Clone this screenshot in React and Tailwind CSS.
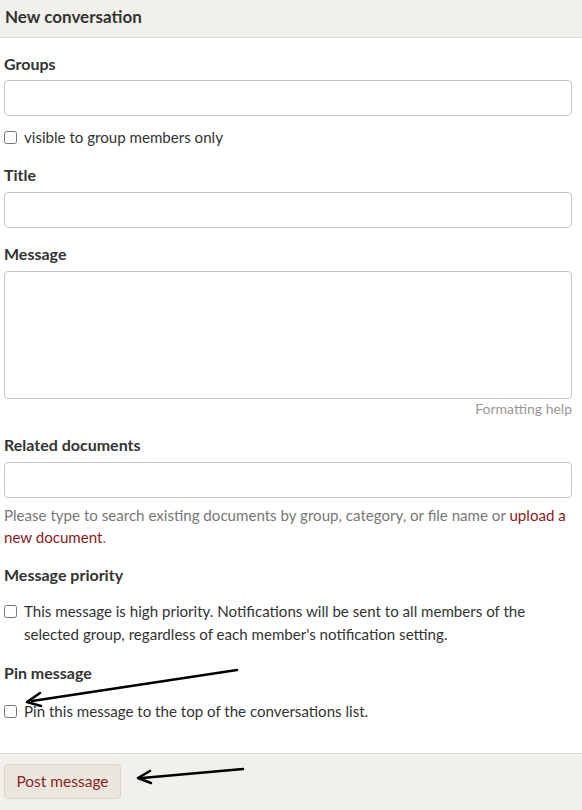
import React from "react";

const Label = ({ children, className = "" }) => (
  <div className={`text-[16px] leading-[20px] font-bold text-[#333] ${className}`}>{children}</div>
);

const Input = ({ className = "" }) => (
  <div className={`h-[36px] w-full rounded-[4px] border border-[#c6c6c6] bg-white ${className}`} />
);

const Check = () => (
  <input type="checkbox" className="m-0 h-[13px] w-[13px] shrink-0" />
);

export default function App() {
  return (
    <div className="relative w-[582px] h-[810px] bg-white text-[#333] overflow-hidden" style={{ fontFamily: "Lato, 'Noto Sans', sans-serif" }}>
      <div className="h-[38px] bg-[#f2f0eb] border-b border-[#dcdad5] px-[5px] pt-[6px]">
        <span className="block text-[17px] leading-[22px] font-bold text-[#333]">New conversation</span>
      </div>

      <div className="pl-[4px] pr-[10px] text-[15.1px]">
        <Label className="mt-[16px]">Groups</Label>
        <Input className="mt-[6px]" />
        <label className="mt-[10px] flex items-center gap-[7px] leading-[22px]">
          <Check />
          <span>visible to group members only</span>
        </label>

        <Label className="mt-[17px]">Title</Label>
        <Input className="mt-[7px]" />

        <Label className="mt-[16px]">Message</Label>
        <div className="mt-[7px] h-[128px] w-full rounded-[4px] border border-[#c6c6c6]" />
        <div className="text-right text-[14px] leading-[20px] text-[#999]">Formatting help</div>

        <Label className="mt-[16px]">Related documents</Label>
        <Input className="mt-[7px]" />
        <p className="mt-[6px] leading-[22px] text-[#777]">
          Please type to search existing documents by group, category, or file name or <span className="text-[#8b1a1a]">upload a<br />new document</span>.
        </p>

        <Label className="mt-[17px]">Message priority</Label>
        <label className="mt-[15px] flex items-start gap-[7px] leading-[23px]">
          <span className="h-[23px] flex items-center"><Check /></span>
          <span>
            This message is high priority. Notifications will be sent to all members of the<br />selected group, regardless of each member's notification setting.
          </span>
        </label>

        <Label className="mt-[17px]">Pin message</Label>
        <label className="mt-[17px] flex items-center gap-[7px] leading-[22px]">
          <Check />
          <span>Pin this message to the top of the conversations list.</span>
        </label>
      </div>

      <div className="mt-[31px] border-t border-[#dcdad5] bg-[#f2f0eb] pl-[4px] pt-[10px] pb-[11px]">
        <button className="h-[35px] w-[117px] rounded-[4px] border border-[#d9d5cc] bg-[#ebe7df] text-[15.5px] text-[#8b2323]">
          Post message
        </button>
      </div>

      <svg className="absolute left-0 top-0 pointer-events-none" width="582" height="810">
        <line x1="237" y1="670" x2="32" y2="701" stroke="#000" strokeWidth="2.5" strokeLinecap="round" />
        <path d="M27 702 L40 693 M27 702 L41 706" stroke="#000" strokeWidth="2.5" strokeLinecap="round" fill="none" />
        <line x1="243" y1="769" x2="142" y2="778" stroke="#000" strokeWidth="2.5" strokeLinecap="round" />
        <path d="M138 778 L150 771 M138 778 L151 783" stroke="#000" strokeWidth="2.5" strokeLinecap="round" fill="none" />
      </svg>
    </div>
  );
}
